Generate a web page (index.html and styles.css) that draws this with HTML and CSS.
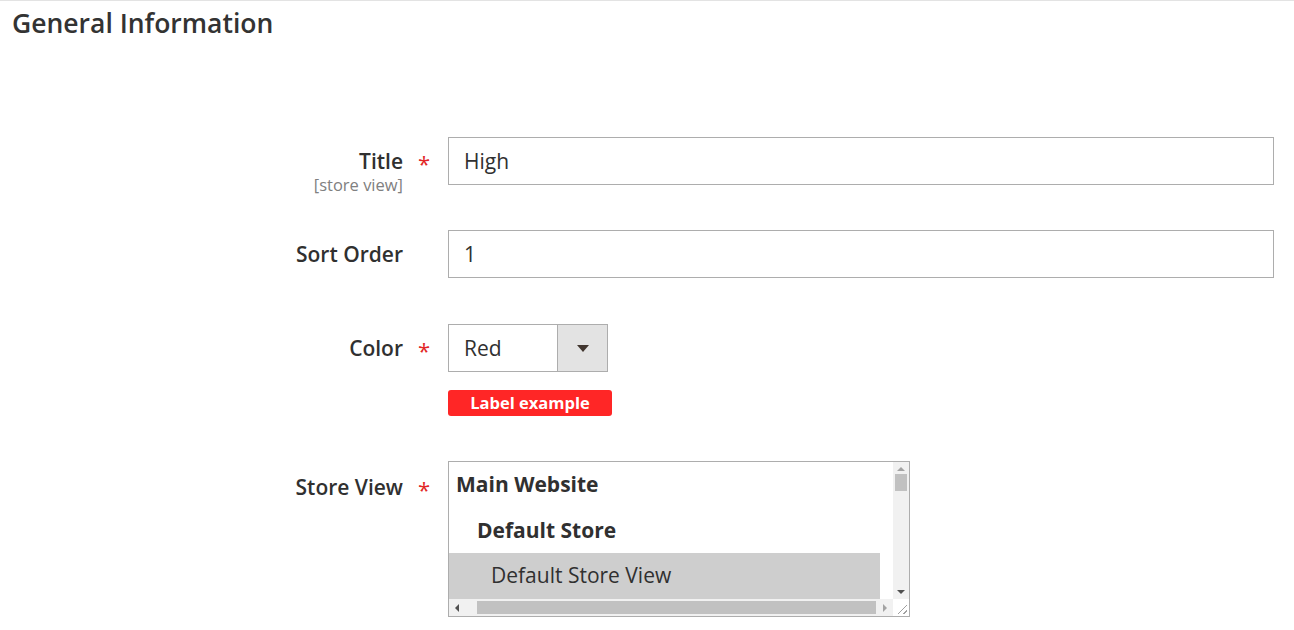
FILE: index.html
```html
<!DOCTYPE html>
<html lang="en">
<head>
    <meta charset="UTF-8">
    <meta name="viewport" content="width=device-width, initial-scale=1.0">
    <title>General Information</title>
    <link rel="stylesheet" href="styles.css">
</head>
<body>
    <div class="section">
        <h2 class="section-title">General Information</h2>
        <div class="fieldset">
            <div class="field">
                <div class="field-label">
                    <label for="title">Title</label>
                    <span class="scope">[store view]</span>
                </div>
                <span class="required">*</span>
                <div class="control">
                    <input class="input-text" type="text" id="title" value="High">
                </div>
            </div>
            <div class="field">
                <div class="field-label">
                    <label for="sort">Sort Order</label>
                </div>
                <span class="required"></span>
                <div class="control">
                    <input class="input-text" type="text" id="sort" value="1">
                </div>
            </div>
            <div class="field field-color">
                <div class="field-label">
                    <label for="color">Color</label>
                </div>
                <span class="required">*</span>
                <div class="control">
                    <div class="select">
                        <span class="select-value">Red</span>
                        <span class="select-button"><span class="caret"></span></span>
                    </div>
                    <div class="badge">Label example</div>
                </div>
            </div>
            <div class="field">
                <div class="field-label label-store">
                    <label>Store View</label>
                </div>
                <span class="required req-store">*</span>
                <div class="control">
                    <div class="multiselect">
                        <div class="options">
                            <div class="option group">Main Website</div>
                            <div class="option group sub">Default Store</div>
                            <div class="option item selected">Default Store View</div>
                        </div>
                        <div class="vscroll">
                            <span class="arrow up"></span>
                            <span class="vthumb"></span>
                            <span class="vspace"></span>
                            <span class="arrow down"></span>
                        </div>
                        <div class="hscroll">
                            <span class="arrow left"></span>
                            <span class="hthumb"></span>
                            <span class="arrow right"></span>
                        </div>
                        <div class="corner"><span class="grip"></span></div>
                    </div>
                </div>
            </div>
        </div>
    </div>
</body>
</html>
```

FILE: styles.css
```css
body {
    margin: 0;
    font-family: "Open Sans", "Liberation Sans", sans-serif;
    color: #303030;
    background-color: #ffffff;
}
.section {
    border-top: 1px solid #e3e3e3;
    height: 629px;
    overflow: hidden;
}
.section-title {
    margin: 0;
    padding: 4px 0 0 12px;
    font-size: 26.5px;
    font-weight: 600;
    line-height: 36px;
    color: #333333;
}
.fieldset {
    margin-top: 96px;
    padding-right: 20px;
    display: flex;
    flex-direction: column;
    gap: 45px;
}
.field {
    display: grid;
    grid-template-columns: 403px 45px 1fr;
    align-items: start;
}
.field-color {
    margin-top: 1px;
}
.field-label {
    text-align: right;
    padding-top: 10px;
}
.field-label label {
    display: block;
    font-size: 21px;
    font-weight: 600;
    line-height: 28px;
}
.scope {
    display: block;
    margin-bottom: -12px;
    font-size: 16.5px;
    line-height: 20px;
    color: #808080;
}
.required {
    padding: 12px 0 0 15px;
    color: #e22626;
    font-size: 22px;
    line-height: 28px;
}
.label-store {
    padding-top: 12px;
}
.req-store {
    padding-top: 14px;
}
.input-text {
    display: block;
    width: 100%;
    height: 48px;
    box-sizing: border-box;
    border: 1px solid #adadad;
    padding: 0 15px;
    font-family: inherit;
    font-size: 21px;
    color: #303030;
    outline: none;
}
.select {
    display: flex;
    width: 160px;
    height: 48px;
    box-sizing: border-box;
    border: 1px solid #adadad;
}
.select-value {
    flex: 1;
    padding-left: 15px;
    font-size: 21px;
    line-height: 46px;
}
.select-button {
    width: 49px;
    background-color: #e3e3e3;
    border-left: 1px solid #adadad;
    display: flex;
    align-items: center;
    justify-content: center;
}
.caret {
    width: 0;
    height: 0;
    border-left: 6px solid transparent;
    border-right: 6px solid transparent;
    border-top: 7px solid #41362f;
    margin-top: 1px;
}
.badge {
    margin-top: 18px;
    width: 164px;
    height: 26px;
    border-radius: 3px;
    background-color: #ff2626;
    color: #ffffff;
    font-size: 16.5px;
    font-weight: 700;
    line-height: 26px;
    text-align: center;
}
.multiselect {
    width: 462px;
    height: 156px;
    box-sizing: border-box;
    border: 1px solid #adadad;
    display: grid;
    grid-template-columns: 1fr 16px;
    grid-template-rows: 1fr 17px;
}
.options {
    overflow: hidden;
}
.option {
    width: 431px;
    height: 45.5px;
    font-size: 21px;
    line-height: 45px;
    white-space: nowrap;
}
.group {
    font-weight: 700;
    padding-left: 7px;
    box-sizing: border-box;
}
.group.sub {
    padding-left: 28px;
}
.item {
    padding-left: 42px;
    box-sizing: border-box;
}
.selected {
    background-color: #cecece;
}
.vscroll {
    background-color: #f1f1f1;
    display: flex;
    flex-direction: column;
    align-items: center;
}
.vthumb {
    width: 12px;
    height: 17px;
    background-color: #c1c1c1;
    margin-top: 3px;
}
.vspace {
    flex: 1;
}
.hscroll {
    background-color: #f1f1f1;
    display: flex;
    align-items: center;
}
.hthumb {
    flex: 1;
    height: 13px;
    background-color: #c1c1c1;
    margin: 0 7px 0 18px;
}
.corner {
    background-color: #ffffff;
    position: relative;
}
.grip {
    position: absolute;
    right: 2px;
    bottom: 2px;
    width: 9px;
    height: 9px;
    background: linear-gradient(135deg, transparent 45%, #a0a0a0 45%, #a0a0a0 55%, transparent 55%, transparent 75%, #a0a0a0 75%, #a0a0a0 85%, transparent 85%);
}
.arrow {
    width: 0;
    height: 0;
}
.arrow.up {
    margin-top: 5px;
    border-left: 4px solid transparent;
    border-right: 4px solid transparent;
    border-bottom: 4px solid #a3a3a3;
}
.arrow.down {
    margin-bottom: 5px;
    border-left: 4px solid transparent;
    border-right: 4px solid transparent;
    border-top: 4px solid #505050;
}
.arrow.left {
    margin-left: 6px;
    border-top: 4px solid transparent;
    border-bottom: 4px solid transparent;
    border-right: 4px solid #505050;
}
.arrow.right {
    margin-right: 6px;
    border-top: 4px solid transparent;
    border-bottom: 4px solid transparent;
    border-left: 4px solid #a3a3a3;
}
```
